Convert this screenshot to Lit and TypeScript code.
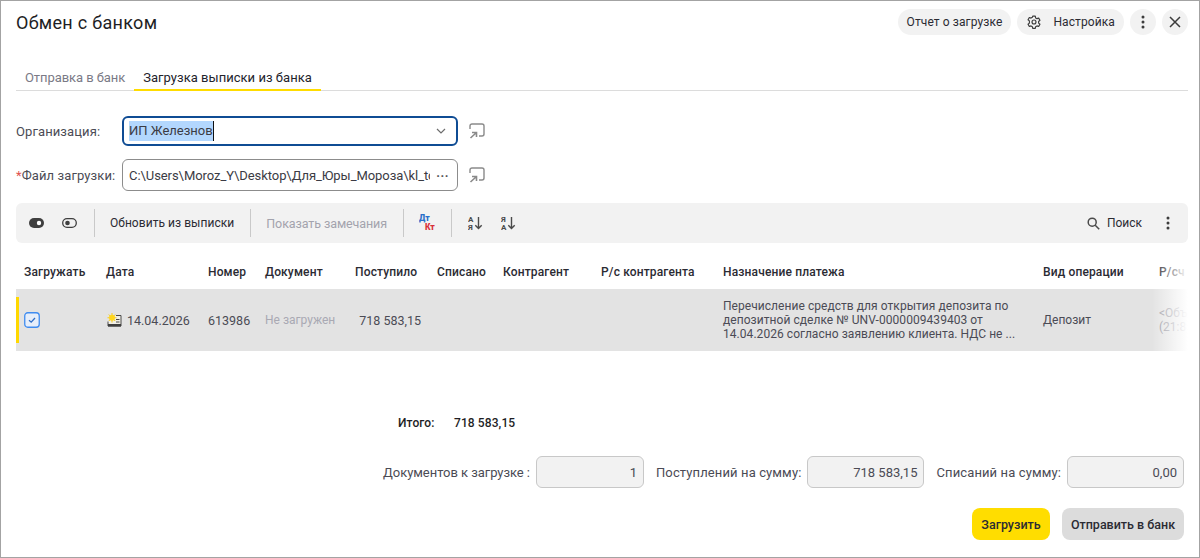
import { LitElement, html, css, svg } from 'lit';
import { customElement } from 'lit/decorators.js';

const COLS = [
  { title: 'Загружать' },
  { title: 'Дата' },
  { title: 'Номер' },
  { title: 'Документ' },
  { title: 'Поступило' },
  { title: 'Списано' },
  { title: 'Контрагент' },
  { title: 'Р/с контрагента' },
  { title: 'Назначение платежа' },
  { title: 'Вид операции' },
  { title: 'Р/сч' },
];

const gearIcon = svg`<svg width="14" height="14" viewBox="0 0 24 24" fill="none" stroke="#3c3c3c" stroke-width="2"><circle cx="12" cy="12" r="3.4"/><path d="M9.8 2h4.4l.6 3 2.3 1.3 2.9-1 2.2 3.8-2.300 2V13.900l2.300 2-2.200 3.800-2.900-1-2.300 1.300-.6 3H9.800l-.6-3-2.300-1.300-2.900 1-2.200-3.800 2.300-2V10.100l-2.300-2 2.200-3.800 2.900 1 2.300-1.300z" stroke-linejoin="round"/></svg>`;
const dotsIcon = svg`<svg width="4" height="14" viewBox="0 0 4 14" fill="#3c3c3c"><circle cx="2" cy="2" r="1.500"/><circle cx="2" cy="7" r="1.500"/><circle cx="2" cy="12" r="1.500"/></svg>`;
const closeIcon = svg`<svg width="12" height="12" viewBox="0 0 12 12" stroke="#3c3c3c" stroke-width="1.500" fill="none"><path d="M1 1l10 10M11 1L1 11"/></svg>`;
const chevronIcon = svg`<svg width="10" height="6" viewBox="0 0 10 6" fill="none" stroke="#6d6d6d" stroke-width="1.200"><path d="M1 1l4 4 4-4"/></svg>`;
const openIcon = svg`<svg width="16" height="16" viewBox="0 0 16 16" fill="none" stroke="#8a8a8a" stroke-width="1.400"><path d="M1 6V3a2 2 0 0 1 2-2h10a2 2 0 0 1 2 2v8a2 2 0 0 1-2 2H10"/><path d="M1.500 15L7.500 9.500M3 9.500H7.500V14" stroke-width="1.600"/></svg>`;
const toggleOn = svg`<svg width="15" height="10" viewBox="0 0 15 10"><rect width="15" height="10" rx="5" fill="#3f3f3f"/><circle cx="10" cy="5" r="2.200" fill="#fff"/></svg>`;
const toggleOff = svg`<svg width="15" height="10" viewBox="0 0 15 10"><rect x=".7" y=".7" width="13.600" height="8.600" rx="4.300" fill="none" stroke="#3f3f3f" stroke-width="1.300"/><circle cx="5.500" cy="5" r="2.300" fill="#3f3f3f"/></svg>`;
const searchIcon = svg`<svg width="13" height="13" viewBox="0 0 13 13" fill="none" stroke="#4a4a4a" stroke-width="1.500"><circle cx="5.200" cy="5.200" r="4"/><path d="M8.200 8.200l4 4"/></svg>`;
const checkIcon = svg`<svg width="16" height="16" viewBox="0 0 16 16" fill="none"><rect x=".75" y=".75" width="14.500" height="14.500" rx="3" fill="#e6eefa" stroke="#3f8cf0" stroke-width="1.300"/><path d="M5 8.200l2.200 2L11 6" stroke="#2f6fc8" stroke-width="1.300"/></svg>`;
const docIcon = svg`<svg width="15" height="14" viewBox="0 0 15 14"><path d="M9 2.500h5V13H1V8.500" fill="#f1efe6" stroke="#4a4a4a"/><rect x="1" y="11" width="13" height="2.500" fill="#3f3f3f"/><path d="M9 6.500h3.500M9 9h3.500" stroke="#4a4a4a"/><path d="M5 0v9.500M.500 4.750h9M1.800 1.500l6.400 6.500M8.200 1.500L1.800 8" stroke="#f7cc1a"/><circle cx="5" cy="4.750" r="3" fill="#ffd61f"/></svg>`;
const sortAz = svg`<svg width="15" height="16" viewBox="0 0 15 16"><text x="0" y="7" font-family="Roboto" font-size="8" font-weight="700" fill="#4a4a4a">А</text><text x="0" y="14.500" font-family="Roboto" font-size="8" font-weight="700" fill="#4a4a4a">Я</text><path d="M10.500 2v11.500M7.300 10.200l3.200 3.300 3.200-3.300" fill="none" stroke="#4a4a4a" stroke-width="1.400"/></svg>`;
const sortZa = svg`<svg width="15" height="16" viewBox="0 0 15 16"><text x="0" y="7" font-family="Roboto" font-size="8" font-weight="700" fill="#4a4a4a">Я</text><text x="0" y="14.500" font-family="Roboto" font-size="8" font-weight="700" fill="#4a4a4a">А</text><path d="M10.500 2v11.500M7.300 10.200l3.200 3.300 3.200-3.300" fill="none" stroke="#4a4a4a" stroke-width="1.400"/></svg>`;
const dtKt = svg`<svg width="16" height="18" viewBox="0 0 16 18"><text x="0" y="7" font-family="Roboto" font-size="8.500" font-weight="900" fill="#2a6fc9">Дт</text><text x="6" y="15.500" font-family="Roboto" font-size="8.500" font-weight="900" fill="#d8313a">Кт</text></svg>`;

@customElement('app-root')
export class AppRoot extends LitElement {
  static styles = css`
    :host {
      display: block;
      width: 1200px;
      height: 558px;
      font-family: Roboto, sans-serif;
      font-size: 13px;
      color: #4b4b55;
    }
    * { box-sizing: border-box; }
    .frame {
      width: 1200px;
      height: 558px;
      border: 1px solid #a3a3a3;
      background: #fff;
      padding: 8px 11px 0 15px;
      display: flex;
      flex-direction: column;
      overflow: hidden;
    }
    .head {
      display: flex;
      align-items: center;
      height: 26px;
      gap: 6px;
    }
    .title {
      font-size: 18px;
      color: #1e1e24;
      letter-spacing: 0.3px;
      margin-right: auto;
    }
    .pill {
      height: 26px;
      border-radius: 13px;
      background: #f2f2f2;
      color: #2b2b33;
      padding: 0 9px;
      display: flex;
      align-items: center;
      font-size: 12px;
      letter-spacing: 0.1px;
    }
    .pill .gear { margin-left: 1px; margin-right: 12px; display: flex; }
    .round { width: 26px; padding: 0; justify-content: center; }
    .tabs {
      display: flex;
      margin-top: 26px;
      height: 30px;
      border-bottom: 1px solid #dcdcdc;
    }
    .tab {
      padding: 9px 9px 0;
      color: #7a7a86;
      letter-spacing: -0.07px;
    }
    .tab.active {
      color: #23232b;
      letter-spacing: 0.03px;
      border-bottom: 2px solid #ffdc00;
      margin-bottom: -1px;
    }
    .field-row {
      display: flex;
      align-items: center;
    }
    .field-row.org { margin-top: 25px; }
    .field-row.file { margin-top: 13px; }
    .label { width: 106px; white-space: nowrap; letter-spacing: 0.1px; }
    .req { color: #e0524d; }
    .input {
      width: 336px;
      border-radius: 6px;
      display: flex;
      align-items: center;
      color: #3b3b44;
      white-space: nowrap;
      overflow: hidden;
    }
    .input.focused {
      height: 30px;
      border: 2px solid #0f4c94;
      padding: 0 10px 0 5px;
    }
    .input.plain {
      height: 32px;
      border: 1px solid #8c8c8c;
      padding: 0 8px 0 6px;
    }
    .sel {
      background: #b3d7fe;
      border-right: 1px solid #111;
      line-height: 20px;
    }
    .input .tail { margin-left: auto; display: flex; }
    .path {
      width: 301px;
      overflow: hidden;
      letter-spacing: -0.06px;
    }
    .more {
      margin-left: auto;
      color: #555;
      font-weight: 700;
      letter-spacing: 0.5px;
      line-height: 1;
      margin-top: -6px;
    }
    .open { margin-left: 11px; display: flex; }
    .toolbar {
      margin-top: 12px;
      height: 40px;
      background: #f2f2f2;
      border-radius: 6px;
      display: flex;
      align-items: center;
      color: #2b2b33;
      font-size: 12px;
      letter-spacing: 0.05px;
    }
    .tool { display: flex; align-items: center; justify-content: center; }
    .tool.t1 { width: 40px; padding-left: 1px; }
    .tool.t2 { width: 38px; padding-right: 12px; }
    .sep { width: 1px; height: 28px; background: #c9c9c9; flex: none; }
    .tool.text { padding: 0 16px 0 15px; }
    .tool.muted { color: #a3a3ad; font-size: 12.500px; letter-spacing: -0.1px; }
    .tool.dk { width: 47px; }
    .sorts { display: flex; margin-left: 7px; }
    .tool.sort { width: 33px; }
    .spacer { flex: 1; }
    .tool.search { gap: 7px; margin-right: 24px; letter-spacing: 0; }
    .tool.menu { margin-right: 18px; }
    .table {
      margin-top: 12px;
      position: relative;
      overflow: hidden;
    }
    .row {
      display: grid;
      grid-template-columns: 82px 102px 57px 90px 82px 66px 98px 122px 320px 116px 37px;
      align-items: center;
    }
    .row > div { padding-left: 8px; white-space: nowrap; }
    .row.th {
      height: 34px;
      font-size: 12px;
      font-weight: 500;
      color: #2b2b33;
      letter-spacing: 0.15px;
    }
    .row.td { height: 62px; background: #e3e3e3; position: relative; font-size: 12.500px; }
    .accent {
      position: absolute;
      left: 0;
      top: 8px;
      width: 3px;
      height: 46px;
      background: #ffd800;
    }
    .cellcheck { display: flex; }
    .celldate { display: flex; align-items: center; gap: 5px; padding-left: 9px !important; }
    .row.td > .right { text-align: right; padding-right: 8px; padding-left: 0; }
    .dim { color: #a9a9b3; font-size: 12px; }
    .purpose { white-space: normal !important; font-size: 12px; line-height: 14px; letter-spacing: 0.05px; }
    .kind { font-size: 12px; }
    .acc { font-size: 12px; line-height: 14px; color: #9a9aa4; }
    .fade {
      position: absolute;
      top: 0;
      right: 0;
      bottom: 0;
      width: 36px;
      background: linear-gradient(to right, rgba(255,255,255,0), #fff);
    }
    .total {
      display: flex;
      margin-top: 65px;
      padding-left: 382px;
      color: #1e1e24;
      font-size: 12px;
      font-weight: 500;
      letter-spacing: 0.1px;
    }
    .total .name { width: 56px; }
    .sums {
      display: flex;
      align-items: center;
      justify-content: flex-end;
      margin-top: 26px;
      padding-right: 4px;
    }
    .sum-label { margin-right: 6px; letter-spacing: 0.12px; }
    .sum-label.first { letter-spacing: -0.05px; }
    .sum-box {
      height: 32px;
      border: 1px solid #c8c8c8;
      border-radius: 6px;
      background: #f2f2f2;
      margin-right: 12px;
      display: flex;
      align-items: center;
      justify-content: flex-end;
      padding-right: 6px;
      width: 117px;
    }
    .sum-box.first { width: 108px; }
    .sum-box.last { margin-right: 0; }
    .actions {
      display: flex;
      justify-content: flex-end;
      gap: 12px;
      margin-top: 20px;
      padding-right: 4px;
    }
    .btn {
      height: 32px;
      border-radius: 8px;
      display: flex;
      align-items: center;
      justify-content: center;
      font-size: 12.500px;
      font-weight: 500;
      color: #2b2b33;
    }
    .btn.yellow { width: 78px; background: #ffdd00; }
    .btn.gray { width: 122px; background: #dcdcdc; }
  `;

  render() {
    return html`
      <div class="frame">
        <div class="head">
          <div class="title">Обмен с банком</div>
          <div class="pill">Отчет о загрузке</div>
          <div class="pill"><span class="gear">${gearIcon}</span>Настройка</div>
          <div class="pill round">${dotsIcon}</div>
          <div class="pill round">${closeIcon}</div>
        </div>
        <div class="tabs">
          <div class="tab">Отправка в банк</div>
          <div class="tab active">Загрузка выписки из банка</div>
        </div>
        <div class="field-row org">
          <div class="label">Организация:</div>
          <div class="input focused">
            <span class="sel">ИП Железнов</span>
            <span class="tail">${chevronIcon}</span>
          </div>
          <span class="open">${openIcon}</span>
        </div>
        <div class="field-row file">
          <div class="label"><span class="req">*</span>Файл загрузки:</div>
          <div class="input plain">
            <span class="path">C:\\Users\\Moroz_Y\\Desktop\\Для_Юры_Мороза\\kl_to</span>
            <span class="more">...</span>
          </div>
          <span class="open">${openIcon}</span>
        </div>
        <div class="toolbar">
          <div class="tool t1">${toggleOn}</div>
          <div class="tool t2">${toggleOff}</div>
          <div class="sep"></div>
          <div class="tool text">Обновить из выписки</div>
          <div class="sep"></div>
          <div class="tool text muted">Показать замечания</div>
          <div class="sep"></div>
          <div class="tool dk">${dtKt}</div>
          <div class="sep"></div>
          <div class="sorts">
            <div class="tool sort">${sortAz}</div>
            <div class="tool sort">${sortZa}</div>
          </div>
          <div class="spacer"></div>
          <div class="tool search">${searchIcon}<span>Поиск</span></div>
          <div class="tool menu">${dotsIcon}</div>
        </div>
        <div class="table">
          <div class="row th">${COLS.map((c) => html`<div>${c.title}</div>`)}</div>
          <div class="row td">
            <span class="accent"></span>
            <div class="cellcheck">${checkIcon}</div>
            <div class="celldate">${docIcon}<span>14.04.2026</span></div>
            <div>613986</div>
            <div class="dim">Не загружен</div>
            <div class="right">718 583,15</div>
            <div></div>
            <div></div>
            <div></div>
            <div class="purpose">Перечисление средств для открытия депозита по депозитной сделке № UNV-0000009439403 от 14.04.2026 согласно заявлению клиента. НДС не ...</div>
            <div class="kind">Депозит</div>
            <div class="acc">&lt;Объ<br />(21:8</div>
          </div>
          <div class="fade"></div>
        </div>
        <div class="total">
          <span class="name">Итого:</span>
          <span>718 583,15</span>
        </div>
        <div class="sums">
          <span class="sum-label first">Документов к загрузке :</span>
          <div class="sum-box first">1</div>
          <span class="sum-label">Поступлений на сумму:</span>
          <div class="sum-box">718 583,15</div>
          <span class="sum-label">Списаний на сумму:</span>
          <div class="sum-box last">0,00</div>
        </div>
        <div class="actions">
          <div class="btn yellow">Загрузить</div>
          <div class="btn gray">Отправить в банк</div>
        </div>
      </div>
    `;
  }
}
